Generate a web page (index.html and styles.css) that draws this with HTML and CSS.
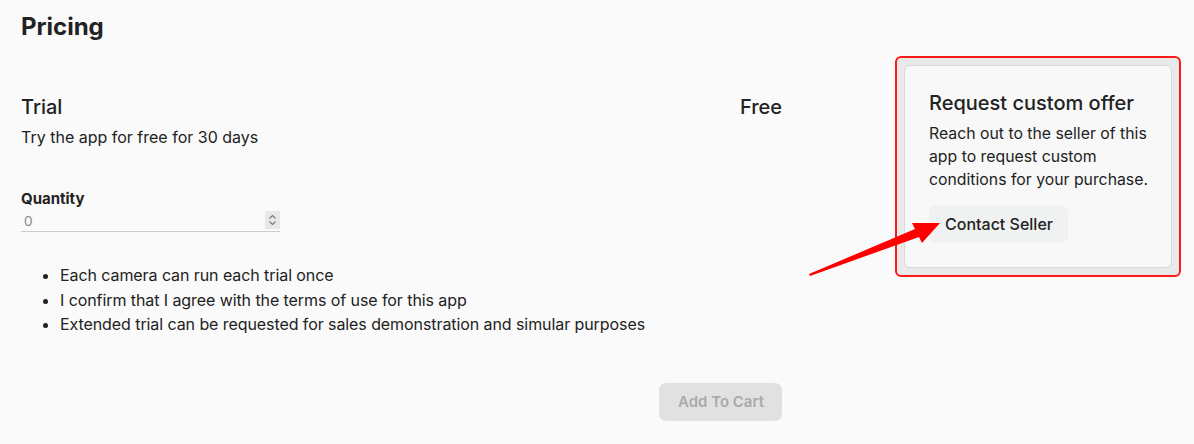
FILE: index.html
```html
<!DOCTYPE html>
<html lang="en">
<head>
    <meta charset="UTF-8">
    <title>Pricing</title>
    <link rel="stylesheet" href="styles.css">
</head>
<body>
    <div class="page">
        <div class="main">
            <h1>Pricing</h1>
            <div class="plan">
                <div class="plan-head">
                    <h2>Trial</h2>
                    <span class="price">Free</span>
                </div>
                <p class="plan-desc">Try the app for free for 30 days</p>
            </div>
            <div class="quantity">
                <label for="qty">Quantity</label>
                <div class="qty-input">
                    <input type="text" id="qty" value="0">
                    <span class="spinner">
                        <svg width="9" height="12" viewBox="0 0 9 12"><path d="M1.5 4.5 L4.5 1.5 L7.5 4.5 M1.5 7.5 L4.5 10.5 L7.5 7.5" fill="none" stroke="#777" stroke-width="1.1"/></svg>
                    </span>
                </div>
            </div>
            <ul class="terms">
                <li>Each camera can run each trial once</li>
                <li>I confirm that I agree with the terms of use for this app</li>
                <li>Extended trial can be requested for sales demonstration and simular purposes</li>
            </ul>
            <div class="actions">
                <button class="cart" disabled>Add To Cart</button>
            </div>
        </div>
        <div class="highlight">
            <div class="offer">
                <h3>Request custom offer</h3>
                <p>Reach out to the seller of this app to request custom conditions for your purchase.</p>
                <button class="contact">Contact Seller</button>
            </div>
        </div>
    </div>
    <svg class="arrow" width="1194" height="444" viewBox="0 0 1194 444">
        <polygon points="809,274 915,229 912,223 940,223 922,243 919,237 810,276" fill="#ff0000"/>
    </svg>
</body>
</html>
```

FILE: styles.css
```css
body {
    margin: 0;
    padding: 0;
    background-color: #fafafa;
    font-family: Inter, "Liberation Sans", sans-serif;
    color: #222;
}
.page {
    display: flex;
    align-items: flex-start;
    padding: 0 13px 0 21px;
}
.main {
    width: 761px;
}
h1 {
    font-size: 24px;
    font-weight: 700;
    margin: 12px 0 0;
    line-height: 30px;
}
.plan {
    margin-top: 52px;
}
.plan-head {
    display: flex;
    justify-content: space-between;
    align-items: baseline;
}
h2 {
    font-size: 20px;
    font-weight: 500;
    margin: 0;
    line-height: 26px;
}
.price {
    font-size: 20px;
    font-weight: 500;
}
.plan-desc {
    font-size: 16px;
    margin: 6px 0 0;
    line-height: 22px;
}
.quantity {
    margin-top: 41px;
}
.quantity label {
    display: block;
    font-size: 15px;
    font-weight: 700;
    line-height: 20px;
}
.qty-input {
    width: 259px;
    display: flex;
    align-items: center;
    border-bottom: 1px solid #ccc;
    height: 22px;
}
.qty-input input {
    flex: 1;
    border: none;
    background: none;
    font-family: "Open Sans", sans-serif;
    font-size: 15px;
    color: #888;
    padding: 0 0 0 3px;
    outline: none;
}
.spinner {
    width: 15px;
    height: 18px;
    background: #e8e8ea;
    display: flex;
    align-items: center;
    justify-content: center;
}
.terms {
    margin: 31px 0 0;
    padding-left: 39px;
    font-size: 16px;
    line-height: 24.5px;
    letter-spacing: -0.08px;
}
.actions {
    display: flex;
    justify-content: flex-end;
    margin-top: 46px;
}
.cart {
    background: #e1e1e1;
    color: #aaa;
    border: none;
    border-radius: 7px;
    font-family: inherit;
    font-size: 15px;
    font-weight: 600;
    padding: 0 18px 0 19px;
    height: 38px;
}
.highlight {
    margin: 56px 0 0 113px;
    border: 2px solid #ff1a1a;
    border-radius: 6px;
    padding: 7px;
    background: #e9e9e9;
}
.offer {
    width: 222px;
    background: #f8f8f8;
    border: 1px solid #d8d8d8;
    border-radius: 6px;
    padding: 24px 20px 24px 24px;
}
h3 {
    font-size: 20px;
    font-weight: 500;
    margin: 0;
    line-height: 26px;
}
.offer p {
    font-size: 15.8px;
    line-height: 23px;
    margin: 6px 0 0;
}
.contact {
    margin-top: 14px;
    background: #f0f1f1;
    border: none;
    border-radius: 7px;
    font-family: inherit;
    font-size: 16px;
    font-weight: 500;
    color: #222;
    height: 38px;
    padding: 0 15px 0 16px;
}
.arrow {
    position: absolute;
    left: 0;
    top: 0;
    pointer-events: none;
}
```
